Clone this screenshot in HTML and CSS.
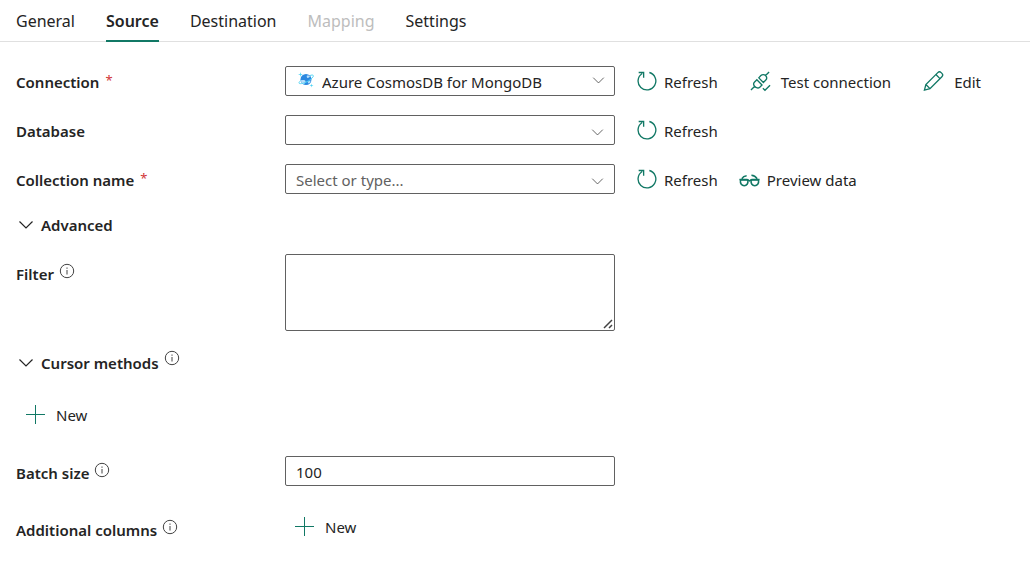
FILE: index.html
```html
<!DOCTYPE html>
<html lang="en">
<head>
<meta charset="utf-8">
<meta name="viewport" content="width=device-width, initial-scale=1">
<title>Copy data - Source</title>
<link rel="stylesheet" href="styles.css">
</head>
<body>
<svg class="sprite" aria-hidden="true">
  <symbol id="refresh" viewBox="0 0 22 22"><path d="M14 2.100A9.300 9.300 0 1 1 6.500 3.200M2.800 2.100H8V7.500"/></symbol>
  <symbol id="chevron" viewBox="0 0 16 16"><path d="M1.500 4.500 8 11l6.500-6.500"/></symbol>
  <symbol id="info" viewBox="0 0 16 16"><circle cx="8" cy="8" r="6.700"/><path d="M8 7v4.500M8 4.500v1.300"/></symbol>
  <symbol id="plus" viewBox="0 0 20 20"><path d="M10.500 1v19M1 10.500h19"/></symbol>
</svg>

<nav class="tabs" role="tablist" aria-label="Activity settings">
  <button class="tab" role="tab" type="button">General</button>
  <button class="tab tab-active" role="tab" type="button" aria-selected="true">Source</button>
  <button class="tab" role="tab" type="button">Destination</button>
  <button class="tab" role="tab" type="button" disabled>Mapping</button>
  <button class="tab" role="tab" type="button">Settings</button>
</nav>

<form class="form">
  <div class="row">
    <div class="label-cell"><label for="connection">Connection</label><span class="required">*</span></div>
    <div class="control">
      <svg class="cosmos" viewBox="0 0 16 16" aria-hidden="true">
        <circle class="planet" cx="8" cy="7.500" r="5.500"/>
        <path class="land" d="M3 8c1 .5 2.500-.5 4 .5 1 .7.500 1.800-.2 2.500L6 12.500C4 11.500 2.800 10 3 8zM9 3.500c1.500-.3 2.500.2 3 1.200l-2 1.200c-1 .3-1.700-1.400-1-2.400zM10 9.500l2.500-1c.2 1-.5 2.200-1.300 3-1 .2-1.700-1-1.200-2z"/>
        <path class="orbit" d="M12 3.500c2.200-.8 3.700-.5 3.300.8-.8 2-4 4.300-7.300 5.900-3 1.400-6.800 2-7 .8-.1-.8.600-1.500 1.500-2.200"/>
        <path class="star" d="M2.500 0 3 2l2 .5L3 3l-.5 2L2 3 0 2.500 2 2zM13.500 11.500l.4 1.600 1.600.4-1.600.4-.4 1.600-.4-1.600-1.600-.4 1.600-.4z"/>
      </svg>
      <select class="field field-icon" id="connection" required><option>Azure CosmosDB for MongoDB</option></select>
      <svg class="chevron chevron-high" aria-hidden="true"><use href="#chevron"/></svg>
    </div>
    <div class="actions actions-wide">
      <button class="action" type="button"><svg class="icon" aria-hidden="true"><use href="#refresh"/></svg>Refresh</button>
      <button class="action" type="button">
        <svg class="icon" viewBox="0 0 22 22" aria-hidden="true"><path d="m1 20.500 3.700-3.700M16.300 5.200 20 1.500M5 16.800c-1.300-1.400-1.500-3.400-.2-4.700l2.400-2.400 5.400 5.400-2.400 2.400c-1.400 1.300-3.800 1-5.200-.7zM9.200 7.700l2.200-2.400c1.400-1.400 3.500-1.400 4.900 0s1.400 3.500 0 4.900l-2.300 2.300zM13.500 18.500l2.200 2.200 5.300-5.200"/></svg>Test connection</button>
      <button class="action" type="button">
        <svg class="icon" viewBox="0 0 22 22" aria-hidden="true"><path d="m1.500 20.500 1.500-5.800L15.500 2.200c1-1 2.500-1 3.500 0l.8.8c1 1 1 2.500 0 3.500L7.300 19zM3 14.700l4.300 4.300M13.500 4.200l4.300 4.300"/></svg>Edit</button>
    </div>
  </div>

  <div class="row">
    <div class="label-cell"><label for="database">Database</label></div>
    <div class="control">
      <select class="field" id="database"><option></option></select>
      <svg class="chevron" aria-hidden="true"><use href="#chevron"/></svg>
    </div>
    <div class="actions">
      <button class="action" type="button"><svg class="icon" aria-hidden="true"><use href="#refresh"/></svg>Refresh</button>
    </div>
  </div>

  <div class="row">
    <div class="label-cell"><label for="collection">Collection name</label><span class="required">*</span></div>
    <div class="control">
      <input class="field" id="collection" type="text" role="combobox" aria-expanded="false" placeholder="Select or type..." required>
      <svg class="chevron" aria-hidden="true"><use href="#chevron"/></svg>
    </div>
    <div class="actions">
      <button class="action" type="button"><svg class="icon" aria-hidden="true"><use href="#refresh"/></svg>Refresh</button>
      <button class="action" type="button">
        <svg class="icon icon-bold" viewBox="0 0 22 22" aria-hidden="true"><path d="M.5 10.500h8L11 12l2.500-1.500h8M3 9.500c1-1.800 2.800-2.800 5-3M13 6c2.500.2 4.500 1.300 6 3.500"/><path d="M1.500 11h7.800c.5 4-1.300 6-3.800 6s-4.500-2-4-6zM12.700 11h7.800c.5 4-1.500 6-4 6s-4.300-2-3.800-6z"/></svg>Preview data</button>
    </div>
  </div>

  <div class="section">
    <button class="toggle" type="button" aria-expanded="true"><svg class="caret" aria-hidden="true"><use href="#chevron"/></svg>Advanced</button>
  </div>

  <div class="row row-tall">
    <div class="label-cell"><label for="filter">Filter</label><button class="info" type="button" aria-label="About filter"><svg aria-hidden="true"><use href="#info"/></svg></button></div>
    <div class="control">
      <textarea class="field area" id="filter"></textarea>
      <svg class="grip" viewBox="0 0 10 10" aria-hidden="true"><path d="M1 9 9 1M6 9l3-3"/></svg>
    </div>
  </div>

  <div class="section section-cursor">
    <button class="toggle" type="button" aria-expanded="true"><svg class="caret" aria-hidden="true"><use href="#chevron"/></svg>Cursor methods</button>
    <button class="info" type="button" aria-label="About cursor methods"><svg aria-hidden="true"><use href="#info"/></svg></button>
  </div>
  <div class="new-line">
    <button class="action add" type="button"><svg class="plus" aria-hidden="true"><use href="#plus"/></svg>New</button>
  </div>

  <div class="row">
    <div class="label-cell label-low"><label for="batch">Batch size</label><button class="info" type="button" aria-label="About batch size"><svg aria-hidden="true"><use href="#info"/></svg></button></div>
    <div class="control"><input class="field" id="batch" type="text" inputmode="numeric" value="100"></div>
  </div>

  <div class="row row-last">
    <div class="label-cell label-low"><span id="columns">Additional columns</span><button class="info" type="button" aria-label="About additional columns"><svg aria-hidden="true"><use href="#info"/></svg></button></div>
    <div class="control control-add"><button class="action add" type="button" aria-describedby="columns"><svg class="plus" aria-hidden="true"><use href="#plus"/></svg>New</button></div>
  </div>
</form>
</body>
</html>
```
FILE: styles.css
```css
* { box-sizing: border-box; }

body {
  margin: 0;
  background: #fff;
  color: #242424;
  font-family: "Noto Sans", "Open Sans", sans-serif;
  font-size: 15px;
  line-height: 20px;
}

button, input, select, textarea { font: inherit; color: inherit; }
button { padding: 0; border: 0; background: none; white-space: nowrap; }
svg { flex: none; fill: none; stroke: currentColor; }
.sprite { display: none; }

.tabs {
  display: flex;
  gap: 31px;
  padding-left: 16px;
  border-bottom: 1px solid #e0e0e0;
}
.tab {
  height: 42px;
  margin-bottom: -1px;
  padding-top: 2px;
  border-bottom: 2px solid transparent;
  font-size: 16px;
}
.tab-active { border-color: #117865; font-weight: 600; }
.tab:disabled { color: #bdbdbd; }

.form { padding: 24px 16px; }
.row {
  display: grid;
  grid-template-columns: 269px 330px 1fr;
  margin-bottom: 17px;
}
.label-cell {
  display: flex;
  align-items: center;
  height: 32px;
  font-weight: 600;
}
.required { margin-left: 6px; padding-bottom: 4px; color: #d13438; font-size: 13px; font-weight: 400; }
.info { height: 16px; margin: 0 0 6px 5px; color: #424242; }
.info svg { display: block; width: 16px; height: 16px; }

.control { position: relative; }
.field {
  display: block;
  width: 100%;
  height: 30px;
  padding: 1px 10px 0;
  border: 1px solid #616161;
  border-radius: 2px;
  background: #fff;
  appearance: none;
  outline: 0;
}
.field::placeholder { color: #616161; opacity: 1; }
.field-icon { padding-left: 36px; }
.cosmos { position: absolute; left: 13px; top: 6px; width: 16px; height: 16px; stroke: none; }
.planet { fill: #2b88e0; }
.land { fill: #b8defa; }
.orbit { stroke: #50d5f5; }
.star { fill: #50d5f5; }
.chevron { position: absolute; right: 11px; top: 11px; width: 13px; height: 13px; color: #424242; pointer-events: none; }
.chevron-high { right: 10px; top: 8px; }
.area { height: 77px; resize: none; }
.grip { position: absolute; right: 2px; bottom: 2px; width: 10px; height: 10px; color: #424242; stroke-width: 1.5; }

.actions { display: flex; align-items: center; gap: 21px; height: 32px; padding-left: 21px; }
.actions-wide { gap: 32px; }
.action { display: flex; align-items: center; gap: 7px; }
.icon { width: 21px; height: 22px; margin-bottom: 3px; color: #117865; stroke-width: 1.4; }
.icon-bold { margin: 0; stroke-width: 1.6; }
.actions-wide .action + .action { gap: 10px; }

.section { display: flex; align-items: center; height: 24px; }
.section-cursor .info { margin-bottom: 10px; }
.toggle { display: flex; align-items: center; gap: 7px; padding-left: 2px; font-weight: 600; }
.caret { width: 16px; height: 16px; stroke-width: 1.2; }
.row-tall { margin: 17px 0 20px; }
.row-tall .label-cell { height: 40px; }
.new-line { padding: 28px 0 29px 9px; }
.add { gap: 11px; height: 24px; }
.plus { width: 20px; height: 20px; margin-bottom: 3px; color: #117865; }
.label-low { height: 34px; }
.row-last { margin: 23px 0 0; }
.control-add { padding: 2px 0 0 9px; }
```
